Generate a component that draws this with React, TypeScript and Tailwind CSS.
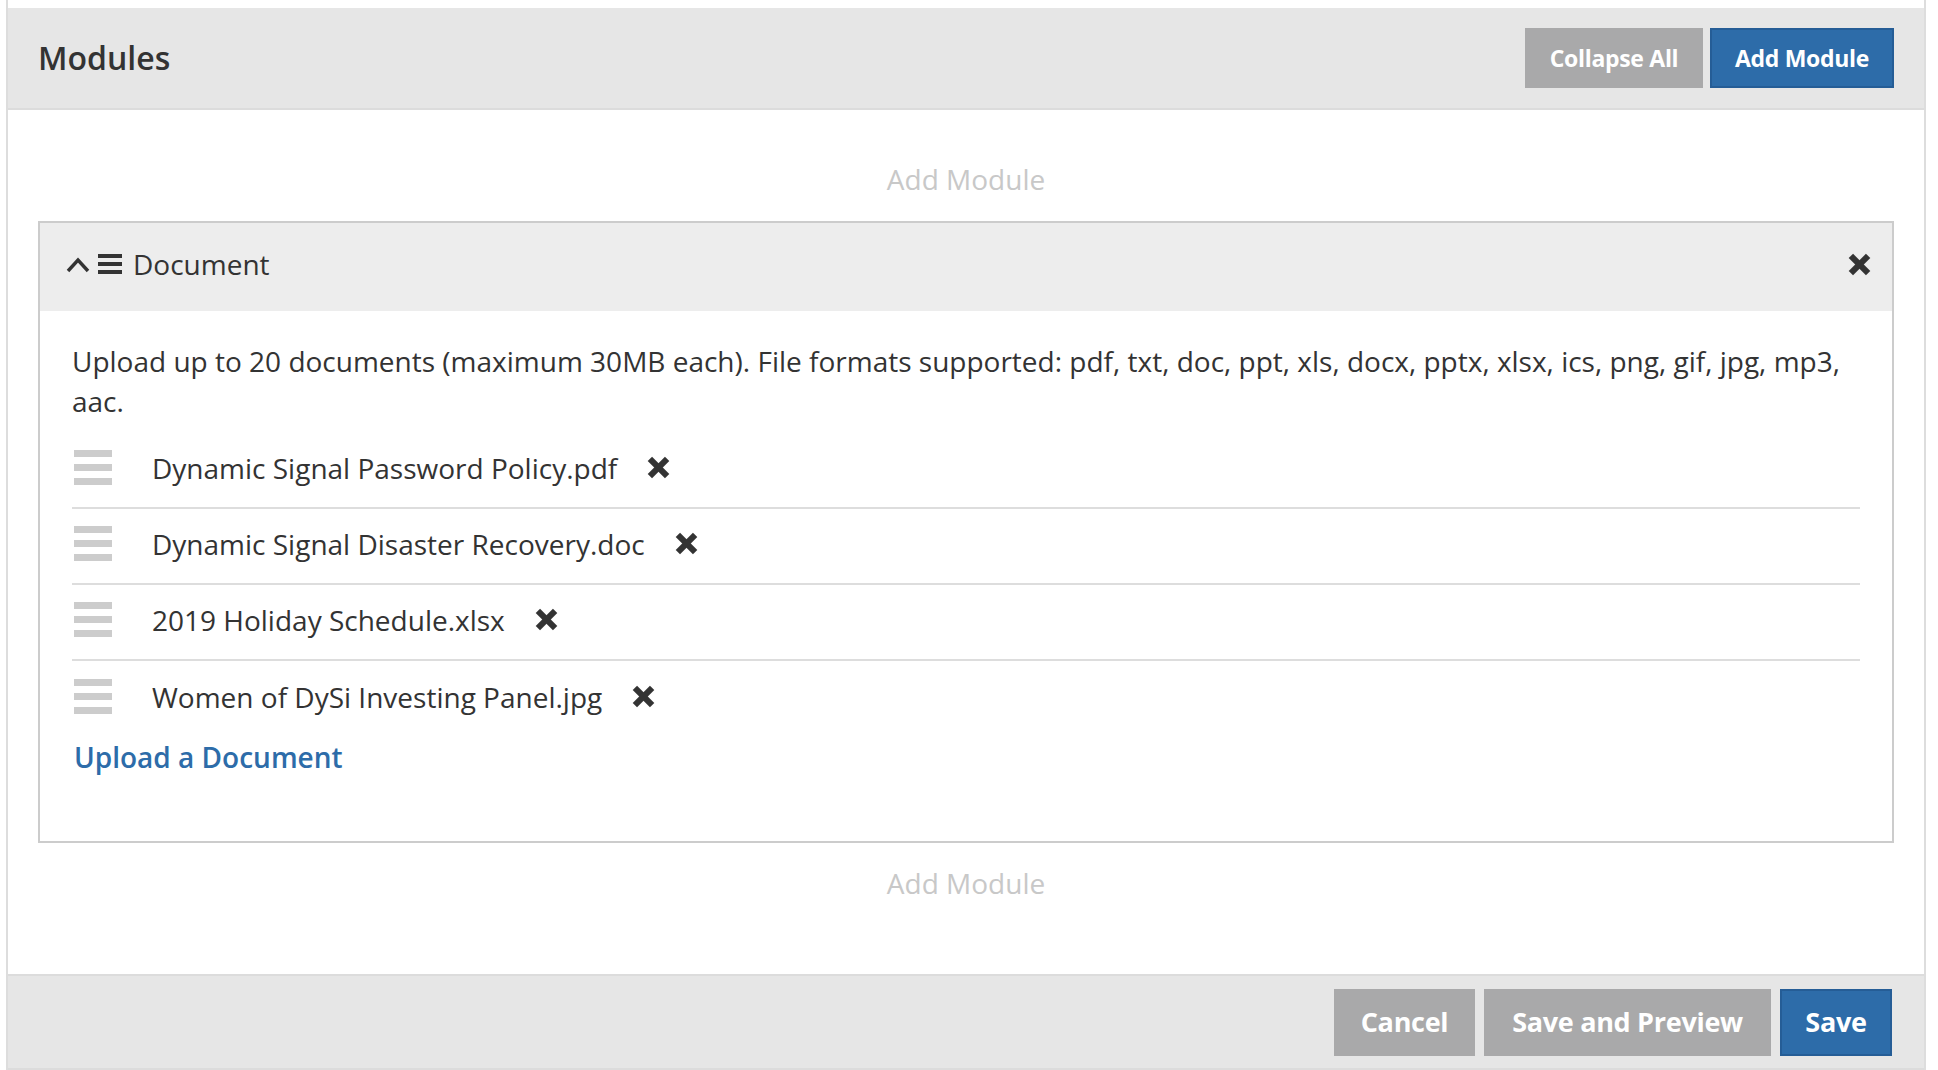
const files = [
  'Dynamic Signal Password Policy.pdf',
  'Dynamic Signal Disaster Recovery.doc',
  '2019 Holiday Schedule.xlsx',
  'Women of DySi Investing Panel.jpg',
];

function CloseIcon({ size = 23 }: { size?: number }) {
  return (
    <svg width={size} height={size} viewBox="0 0 24 24" className="shrink-0">
      <g stroke="#333333" strokeWidth="6.4" strokeLinecap="butt">
        <line x1="3" y1="3" x2="21" y2="21" />
        <line x1="21" y1="3" x2="3" y2="21" />
      </g>
    </svg>
  );
}

function DragHandle() {
  return (
    <div className="flex w-[38px] shrink-0 flex-col gap-[7px]">
      <span className="h-[7px] w-full bg-[#cccccc]" />
      <span className="h-[7px] w-full bg-[#cccccc]" />
      <span className="h-[7px] w-full bg-[#cccccc]" />
    </div>
  );
}

function AddModuleLink() {
  return (
    <div className="text-center text-[28px] leading-[40px] text-[#c8c8c8]">Add Module</div>
  );
}

export default function App() {
  return (
    <div className="min-h-screen bg-white font-['Open_Sans',sans-serif] text-[#333333]">
      <div className="ml-[6px] w-[1920px] border-x-2 border-[#dddddd] pt-2">
        {/* Header */}
        <div className="flex h-[102px] items-center justify-between border-b-2 border-[#dcdcdc] bg-[#e6e6e6] pl-[30px] pr-[30px]">
          <h1 className="text-[32px] font-semibold text-[#333333]">Modules</h1>
          <div className="flex gap-[7px]">
            <button className="h-[60px] w-[178px] bg-[#a9a9aa] text-[23px] font-bold tracking-[-0.3px] text-white">
              Collapse All
            </button>
            <button className="h-[60px] w-[184px] border-2 border-[#255d96] bg-[#2d6ca9] text-[23px] font-bold tracking-[-0.3px] text-white">
              Add Module
            </button>
          </div>
        </div>

        {/* Body */}
        <div className="px-[30px] pt-[49px] pb-[71px]">
          <AddModuleLink />

          <div className="mt-[22px] mb-[20px] border-2 border-[#cccccc]">
            <div className="flex h-[88px] items-center justify-between bg-[#ededed] pb-[6px] pl-[26px] pr-[21px]">
              <div className="flex items-center">
                <svg width="24" height="18" viewBox="0 0 24 18" className="mr-[8px]">
                  <polyline
                    points="2,16 12,5 22,16"
                    fill="none"
                    stroke="#333333"
                    strokeWidth="3.4"
                  />
                </svg>
                <div className="mr-[11px] flex w-[24px] flex-col gap-[4px]">
                  <span className="h-[4px] w-full bg-[#333333]" />
                  <span className="h-[4px] w-full bg-[#333333]" />
                  <span className="h-[4px] w-full bg-[#333333]" />
                </div>
                <span className="text-[28px] text-[#333333]">Document</span>
              </div>
              <CloseIcon />
            </div>

            <div className="px-[32px] pt-[30px] pb-[64px]">
              <p className="text-[28px] leading-[40px] text-[#333333]">
                Upload up to 20 documents (maximum 30MB each). File formats supported: pdf, txt,
                doc, ppt, xls, docx, pptx, xlsx, ics, png, gif, jpg, mp3, aac.
              </p>
              <ul className="mt-[12px]">
                {files.map((f, i) => (
                  <li
                    key={f}
                    className={
                      'flex h-[76px] items-center pb-[5px] ' +
                      (i < files.length - 1 ? 'border-b-2 border-[#dddddd]' : '')
                    }
                  >
                    <div className="ml-[2px]">
                      <DragHandle />
                    </div>
                    <span className="ml-[40px] text-[28px] text-[#333333]">{f}</span>
                    <span className="ml-[30px] flex">
                      <CloseIcon />
                    </span>
                  </li>
                ))}
              </ul>
              <a className="ml-[2px] block text-[28px] leading-[40px] font-semibold text-[#2d6ca9]">
                Upload a Document
              </a>
            </div>
          </div>

          <AddModuleLink />
        </div>

        {/* Footer */}
        <div className="flex h-[96px] items-center justify-end gap-[9px] border-y-2 border-[#dcdcdc] bg-[#e6e6e6] pr-[32px]">
          <button className="h-[67px] w-[141px] bg-[#a9a9aa] text-[27px] font-bold tracking-[-0.3px] text-white">
            Cancel
          </button>
          <button className="h-[67px] w-[287px] bg-[#a9a9aa] text-[27px] font-bold tracking-[-0.3px] text-white">
            Save and Preview
          </button>
          <button className="h-[67px] w-[112px] border-2 border-[#255d96] bg-[#2d6ca9] text-[27px] font-bold tracking-[-0.3px] text-white">
            Save
          </button>
        </div>
      </div>
    </div>
  );
}
